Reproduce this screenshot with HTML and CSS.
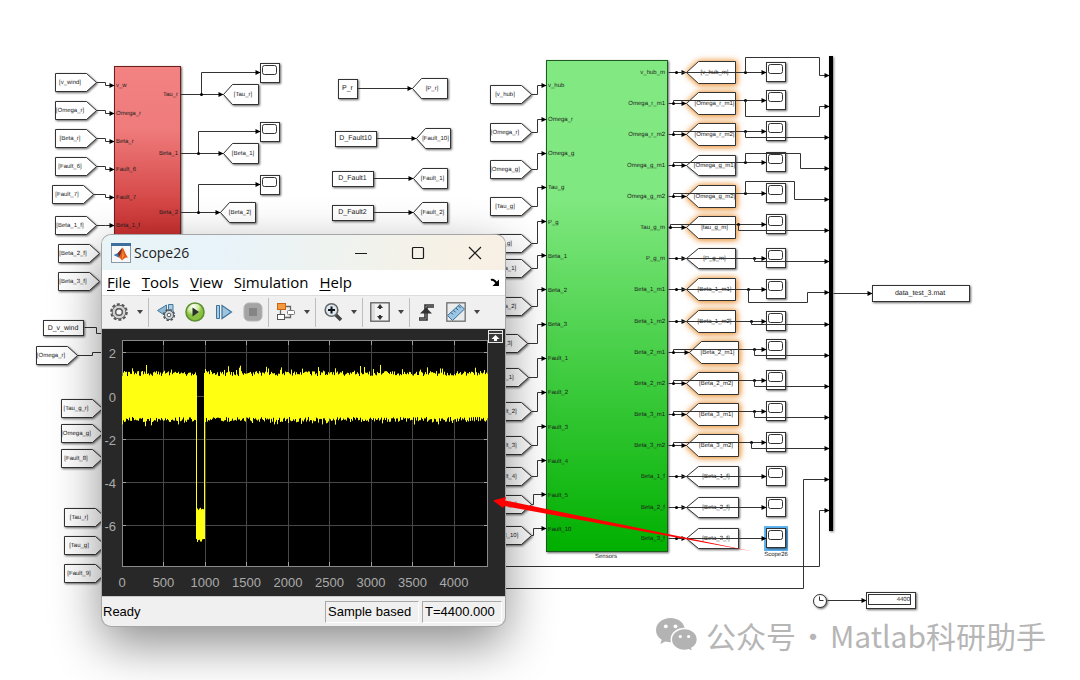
FILE: index.html
```html
<!DOCTYPE html>
<html lang="en">
<head>
<meta charset="utf-8">
<meta name="viewport" content="width=device-width, initial-scale=1">
<title>Scope26</title>
<link rel="stylesheet" href="styles.css">
</head>
<body>
<main class="desktop">
  <svg class="diagram" id="diagram" role="img" aria-label="Simulink block diagram">
    <defs>
      <linearGradient id="redFill" x1="0" y1="0" x2="0" y2="1">
        <stop offset="0" stop-color="#f38282"/><stop offset="0.33" stop-color="#ef7b7b"/><stop offset="0.88" stop-color="#c93030"/><stop offset="1" stop-color="#c22828"/>
      </linearGradient>
      <linearGradient id="greenFill" x1="0" y1="0" x2="0" y2="1">
        <stop offset="0" stop-color="#82e982"/><stop offset="0.28" stop-color="#80e880"/><stop offset="1" stop-color="#00b000"/>
      </linearGradient>
    </defs>
  </svg>

  <section class="window" aria-label="Scope26">
    <header class="titlebar">
      <svg class="app-icon" viewBox="0 0 20 20" width="20" height="20" aria-hidden="true">
        <rect x=".5" y=".5" width="19" height="19" fill="#f7f8fa" stroke="#8b98a5"/>
        <rect width="20" height="3" fill="#3e6f9e"/>
        <path d="M2.500 12 7 10l3 3-2.500 1.500z" fill="#3a78b5"/>
        <path d="M6.500 10.300 11.500 4.500 10.500 12.500 8.200 14z" fill="#7b2c1e"/>
        <path d="M11.500 4.500c2 2 3 7.500 6 10.500-2.500-1.200-4 .5-6.500 2.500-.8-1.500-1.800-2.500-3.300-3.300 2.300-2.200 3-6.200 3.800-9.700z" fill="#e4591b"/>
        <path d="M11.500 4.500c.6 3.500 0 8-.7 12.500l2-4z" fill="#f5a53a"/>
      </svg>
      <h1 class="title">Scope26</h1>
      <div class="window-buttons">
        <button type="button" aria-label="Minimize"><svg width="14" height="14"><path d="M1 7.500h12"/></svg></button>
        <button type="button" aria-label="Maximize"><svg width="14" height="14"><rect x="1.500" y="1.500" width="11" height="11" rx="1"/></svg></button>
        <button type="button" aria-label="Close"><svg width="14" height="14"><path d="M1 1l12 12M13 1 1 13"/></svg></button>
      </div>
    </header>

    <nav class="menubar">
      <button type="button"><u>F</u>ile</button>
      <button type="button"><u>T</u>ools</button>
      <button type="button"><u>V</u>iew</button>
      <button type="button">S<u>i</u>mulation</button>
      <button type="button"><u>H</u>elp</button>
      <button type="button" class="dock" aria-label="Dock"><svg width="10" height="9" viewBox="0 0 10 9"><path d="M1 2c2-1 3.500 0 5.500 3" fill="none" stroke="#000" stroke-width="2"/><path d="M9 1.500V8H2.500z"/></svg></button>
    </nav>

    <div class="toolbar">
      <div class="group">
        <button type="button" class="tool" aria-label="Configuration"><svg width="20" height="20" viewBox="0 0 20 20"><circle cx="10" cy="10" r="7.700" fill="none" stroke="#555" stroke-width="2.200" stroke-dasharray="3 1.840"/><circle cx="10" cy="10" r="6.800" fill="#d3d3d3" stroke="#666"/><circle cx="10" cy="10" r="3.300" fill="#f4f4f4" stroke="#555" stroke-width="1.400"/></svg></button>
        <button type="button" class="caret" aria-label="Configuration options"></button>
      </div>
      <div class="group">
        <button type="button" class="tool" aria-label="Step back"><svg width="20" height="20" viewBox="0 0 20 20"><path d="M10.500 3 1.500 8.500l9 6z" fill="#8fb9d6" stroke="#47779b"/><path d="M12.500 2.500h4.500v9h-4.500z" fill="#a9cce3" stroke="#47779b"/><circle cx="13" cy="13" r="5.200" fill="none" stroke="#4b545b" stroke-width="1.800" stroke-dasharray="2.400 1.650"/><circle cx="13" cy="13" r="4.500" fill="#d5d9dc" stroke="#545d64"/><circle cx="13" cy="13" r="1.800" fill="#fff" stroke="#545d64"/></svg></button>
        <button type="button" class="tool" aria-label="Run"><svg width="20" height="20" viewBox="0 0 20 20"><defs><radialGradient id="run" cx=".4" cy=".2"><stop offset="0" stop-color="#fff"/><stop offset=".6" stop-color="#d2eba2"/><stop offset="1" stop-color="#8cc043"/></radialGradient></defs><circle cx="10" cy="10" r="9" fill="url(#run)" stroke="#5c9130" stroke-width="1.600"/><path d="M7.500 5.500 14 10l-6.500 4.500z" fill="#26302c"/></svg></button>
        <button type="button" class="tool" aria-label="Step forward"><svg width="20" height="20" viewBox="0 0 20 20"><path d="M2.500 3.500h3v13h-3z" fill="#a8cbe4" stroke="#3f739b"/><path d="M8 3.500 17.500 10 8 16.500z" fill="#9dc5e1" stroke="#3f739b" stroke-width="1.200"/></svg></button>
        <button type="button" class="tool" aria-label="Stop"><svg width="20" height="20" viewBox="0 0 20 20"><rect x="1" y="1" width="18" height="18" rx="5" fill="#a4a4a4" stroke="#b4b4b4"/><rect x="6" y="6" width="8" height="8" fill="#858585"/></svg></button>
      </div>
      <div class="group">
        <button type="button" class="tool" aria-label="Highlight block"><svg width="20" height="20" viewBox="0 0 20 20"><path d="M9 4.500h5.500V9M9 15.500h5.500V12M4.500 7v5" fill="none" stroke="#666" stroke-width="1.300"/><rect x="1.500" y="1.500" width="8" height="6" fill="#f59a3c" stroke="#c7651a"/><rect x="1.500" y="12.500" width="7" height="5" fill="#fff" stroke="#555"/><rect x="11.500" y="8.500" width="7" height="4" rx="1" fill="#fff" stroke="#777"/></svg></button>
        <button type="button" class="caret" aria-label="Highlight options"></button>
      </div>
      <div class="group">
        <button type="button" class="tool" aria-label="Zoom in"><svg width="20" height="20" viewBox="0 0 20 20"><path d="m12.500 12.500 5.500 5.500" stroke="#444" stroke-width="3.500"/><circle cx="8.500" cy="8" r="6.300" fill="#dce9f3" stroke="#666" stroke-width="1.600"/><path d="M8.500 4.500v7M5 8h7" stroke="#111" stroke-width="2"/></svg></button>
        <button type="button" class="caret" aria-label="Zoom options"></button>
      </div>
      <div class="group">
        <button type="button" class="tool" aria-label="Scale axes"><svg width="20" height="20" viewBox="0 0 20 20"><rect x=".8" y=".8" width="18.400" height="18.400" fill="#f2f2f2" stroke="#666" stroke-width="1.400"/><path d="M2 2h3v16H2z" fill="#dcdedf"/><path d="M10 2 13 6H7zM10 18l3-4H7z" fill="#333"/><path d="M10 4v3M10 13v3" stroke="#333" stroke-width="2"/></svg></button>
        <button type="button" class="caret" aria-label="Scale options"></button>
      </div>
      <div class="group">
        <button type="button" class="tool" aria-label="Triggers"><svg width="20" height="20" viewBox="0 0 20 20"><path d="M2 17h7V4h8" fill="none" stroke="#333" stroke-width="3.600"/><path d="M2.500 17H9V4h8" fill="none" stroke="#888"/><path d="M3 11.500h12L9 5.500z" fill="#333"/></svg></button>
        <button type="button" class="tool" aria-label="Measurements"><svg width="20" height="20" viewBox="0 0 20 20"><rect x=".8" y=".8" width="18.400" height="18.400" fill="#e9ebec" stroke="#777" stroke-width="1.400"/><path d="M1.500 13.500 13.500 2.500l5 4.500L6.500 18.500z" fill="#9bc7e6" stroke="#466f92"/><path d="m5 10.500 2 2m.5-4.200 2 2m.5-4.200 2 2m.5-4.200 2 2" stroke="#294f70"/></svg></button>
        <button type="button" class="caret" aria-label="Measurement options"></button>
      </div>
    </div>

    <svg class="plot" id="plot" viewBox="0 0 403 267" role="img" aria-label="Scope signal, 0 to 4400"></svg>

    <footer class="statusbar">
      <span class="ready">Ready</span>
      <span class="panel panel-mode">Sample based</span>
      <span class="panel panel-time">T=4400.000</span>
    </footer>
  </section>

  <svg class="pointer" aria-hidden="true"><path d="M493 500.500 506 497l-1 3.500L753 551.500 504 506l-1 2z" fill="#ff0000"/></svg>

  <div class="watermark">
    <svg width="42" height="34" viewBox="0 0 42 34" aria-hidden="true">
      <path d="M14.500 0C6.500 0 0 5.200 0 12.200c0 4 2.200 7.400 5.700 9.600L4.300 26l5-2.600c1.700.5 3.400.8 5.200.8C22.500 24.200 29 19 29 12.200S22.500 0 14.500 0z"/>
      <path class="cut" d="M28.500 10.500c-7.200 0-13.200 4.700-13.200 11s6 11 13.200 11c1.600 0 3-.2 4.400-.7l4 2.200-1-3.800c3.300-2 5.500-5.100 5.500-8.700 0-6.300-5.700-11-12.900-11z"/>
      <circle class="eye" cx="9.800" cy="8.300" r="1.900"/><circle class="eye" cx="19.500" cy="8.300" r="1.900"/>
      <circle class="eye" cx="24.300" cy="18.500" r="1.600"/><circle class="eye" cx="32.600" cy="18.500" r="1.600"/>
    </svg>
    <span>公众号</span><span>·</span><span>Matlab科研助手</span>
  </div>
</main>
<script src="diagram.js"></script>
</body>
</html>
```
FILE: styles.css
```css
* { box-sizing: border-box; }

body {
  margin: 0;
  background: #fff;
  font-family: "Liberation Sans", Arial, sans-serif;
}

.desktop {
  position: relative;
  min-height: 100vh;
  overflow: hidden;
}

/* Block diagram */
.diagram,
.pointer {
  position: absolute;
  inset: 0;
  width: 100%;
  height: 100%;
}
.pointer { pointer-events: none; }

.diagram text {
  font-size: 6px;
  fill: #222;
  text-rendering: geometricPrecision;
}
.diagram .big { font-size: 7px; }
.diagram .port { fill: #1d1d1d; }
.wire { fill: none; stroke: #333; stroke-width: 1; }
.tip, .dot { fill: #000; }
.block {
  fill: #fff;
  stroke: #333;
  stroke-width: 1;
  filter: drop-shadow(1px 1px 1px rgba(0, 0, 0, 0.6));
}
.block-red { fill: url(#redFill); stroke: #6b2020; }
.block-green { fill: url(#greenFill); stroke: #1f5a1f; }
.screen { fill: #fff; stroke: #333; }
.hilite {
  filter: drop-shadow(0 0 3px rgba(240, 150, 50, 0.8)) drop-shadow(1px 1px 2px rgba(230, 140, 50, 0.7));
}
.selected { fill: #5eb6f5; }
.mux { fill: #000; filter: drop-shadow(1px 1px 1px rgba(0, 0, 0, 0.5)); }

/* Scope window */
.window {
  position: absolute;
  left: 102px;
  top: 235px;
  width: 403px;
  display: flex;
  flex-direction: column;
  overflow: hidden;
  border-radius: 9px;
  background: #f0f0f0;
  box-shadow: 0 0 0 1px #a6a6a6, 0 18px 50px rgba(0, 0, 0, 0.46);
}

button {
  margin: 0;
  padding: 0;
  border: 0;
  background: none;
  color: inherit;
  font: inherit;
}

.titlebar {
  display: flex;
  align-items: center;
  height: 35px;
  padding: 0 2px 0 9px;
  background: linear-gradient(100deg, #e8f4f5 0%, #e8f3fa 28%, #eef3f0 55%, #f6f1e6 85%, #f8efe4 100%);
  font-family: "Open Sans", "Noto Sans", sans-serif;
}
.title {
  margin: 0 0 0 3px;
  font-size: 14px;
  font-weight: 400;
  color: #222;
}
.window-buttons {
  display: flex;
  margin-left: auto;
}
.window-buttons button {
  display: grid;
  place-items: center;
  width: 57px;
  height: 35px;
}
.window-buttons svg { fill: none; stroke: #1a1a1a; stroke-width: 1.2; }

.menubar {
  display: flex;
  align-items: center;
  gap: 11px;
  height: 25px;
  padding: 0 5px;
  background: #fff;
  font: 15px/25px "Open Sans", "Noto Sans", sans-serif;
  color: #000;
}
.menubar u { text-underline-offset: 2px; text-decoration-thickness: 1px; }
.menubar .dock { display: grid; margin-left: auto; }

.toolbar {
  display: flex;
  align-items: center;
  height: 34px;
  background: #f0f0f0;
  border-top: 1px solid #dcdcdc;
  border-bottom: 1px solid #cfcfcf;
}
.group {
  display: flex;
  align-items: center;
  height: 29px;
  padding: 0 1px 0 2px;
  border-right: 1px solid #bdbdbd;
}
.group:last-child { border-right: 0; }
.tool {
  display: grid;
  place-items: center;
  width: 29px;
  height: 28px;
}
.caret {
  display: grid;
  place-items: center;
  width: 14px;
  height: 28px;
}
.caret::before {
  content: "";
  border: 3px solid transparent;
  border-top: 4px solid #444;
  border-bottom: 0;
}

.plot {
  display: block;
  width: 100%;
  background: #282828;
}
.plot text { font-size: 13px; fill: #ababab; }
.plot .area { fill: #000; stroke: #8a8a8a; }
.plot .grid { stroke: #484848; fill: none; }
.plot .tick { stroke: #a0a0a0; fill: none; }
.plot .trace { stroke: #ffff12; stroke-width: 1; fill: none; }

.statusbar {
  display: flex;
  align-items: center;
  gap: 3px;
  height: 30px;
  padding: 1px 3px 0 1px;
  border-top: 1px solid #c8c8c8;
  font-size: 13px;
  line-height: 20px;
  color: #000;
}
.ready { margin-right: auto; }
.panel {
  height: 22px;
  padding-left: 2px;
  border: 1px solid;
  border-color: #a8a8a8 #fff #fff #a8a8a8;
  white-space: nowrap;
}
.panel-mode { width: 94px; }
.panel-time { width: 80px; }

/* Watermark */
.watermark {
  position: absolute;
  right: 34px;
  bottom: 23px;
  display: flex;
  align-items: center;
  gap: 2px;
  font: 400 30px/44px "Noto Sans CJK SC", sans-serif;
  color: #b6b6b6;
}
.watermark svg { margin-right: 6px; fill: #b3b3b3; }
.watermark .cut { stroke: #fff; stroke-width: 1.5; }
.watermark .eye { fill: #fff; }
```
FILE: diagram.js
```js
const NS = "http://www.w3.org/2000/svg";
const diagram = document.getElementById("diagram");
const plot = document.getElementById("plot");

// Centre one-pixel strokes on the pixel grid.
const px = v => Math.floor(v) + 0.5;

function add(parent, name, attrs, text) {
  const el = document.createElementNS(NS, name);
  for (const key in attrs) el.setAttribute(key, attrs[key]);
  if (text !== undefined) el.textContent = text;
  parent.appendChild(el);
  return el;
}
function label(x, y, text, anchor = "middle", cls = "") {
  add(diagram, "text", { x, y: y + 2, "text-anchor": anchor, class: cls }, text);
}
function poly(points, cls, close) {
  const d = points.map((p, i) => (i ? "L" : "M") + px(p[0]) + " " + px(p[1])).join("");
  add(diagram, "path", { d: d + (close ? "Z" : ""), class: cls });
}
function wire(points, arrow = true) {
  poly(points, "wire");
  if (!arrow) return;
  const [x, y] = points[points.length - 1];
  add(diagram, "path", { d: `M${px(x)} ${px(y)}l-5 -2.500v5z`, class: "tip" });
}
const dot = (x, y) => add(diagram, "circle", { cx: px(x), cy: px(y), r: 1.5, class: "dot" });

function fromTag(x, y, text, tip = x + 41, textX = x + 15) {
  poly([[x, y - 9], [tip - 10, y - 9], [tip, y], [tip - 10, y + 9], [x, y + 9]], "block", true);
  label(textX, y, text);
}
function gotoTag(x, right, y, half, notch, text, cls = "") {
  poly([[x, y], [x + notch, y - half], [right, y - half], [right, y + half], [x + notch, y + half]], "block " + cls, true);
  label((x + notch + right) / 2 - 2, y, text);
}
function box(x, y, w, h, cls = "block") {
  add(diagram, "rect", { x: px(x), y: px(y), width: w, height: h, class: cls });
}
function scope(x, y) {
  box(x, y, 19, 19);
  add(diagram, "rect", { x: px(x + 2), y: px(y + 2), width: 14, height: 9, rx: 2, class: "screen" });
}

// Red subsystem
box(114, 66, 66, 190, "block block-red");
[["[v_wind]", "v_w", 55, 82, 85], ["[Omega_r]", "Omega_r", 55, 110, 113], ["[Beta_r]", "Beta_r", 55, 138, 141],
 ["[Fault_6]", "Fault_6", 55, 166, 169], ["[Fault_7]", "Fault_7", 52, 194, 197], ["[Beta_1_f]", "Beta_1_f", 55, 225, 225]
].forEach(([tag, port, x, y, portY]) => {
  fromTag(x, y, tag);
  wire([[x + 41, y], [105, y], [105, portY], [114, portY]]);
  label(116, portY, port, "start", "port");
});
[["Tau_r", 94, 223, 258, 201, 72], ["Beta_1", 153, 223, 258, 198, 131], ["Beta_2", 212, 220, 255, 198, 184]
].forEach(([name, y, x, right, branch, scopeY]) => {
  label(178, y, name, "end", "port");
  gotoTag(x, right, y, 10, 9, `[${name}]`);
  scope(260, scopeY - 9);
  wire([[180, y], [x, y]]);
  wire([[branch, y], [branch, scopeY], [260, scopeY]]);
  dot(branch, y);
});

// Inputs left of the scope window
[["[Beta_2_f]", 58, 253], ["[Beta_3_f]", 58, 281], ["[Omega_r]", 36, 355], ["[Tau_g_r]", 61, 408], ["[Omega_g]", 61, 433],
 ["[Fault_8]", 61, 458], ["[Tau_r]", 64, 517], ["[Tau_g]", 64, 545], ["[Fault_9]", 64, 573]
].forEach(([tag, x, y]) => fromTag(x, y, tag));
box(43, 320, 40, 15);
label(63, 328, "D_v_wind", "middle", "big");
wire([[84, 327], [96, 327], [96, 333], [104, 333]], false);
wire([[77, 355], [92, 355], [92, 352], [104, 352]], false);

// Constants and their Goto tags
[["P_r", 338, 19, 88, 19, 412, 447, "[P_r]"], ["D_Fault10", 335, 41, 138, 15, 416, 450, "[Fault_10]"],
 ["D_Fault1", 332, 41, 178, 15, 413, 447, "[Fault_1]"], ["D_Fault2", 332, 41, 212, 15, 413, 447, "[Fault_2]"]
].forEach(([name, x, w, y, h, gx, right, tag]) => {
  box(x, y - Math.floor(h / 2), w, h);
  label(x + w / 2, y, name, "middle", "big");
  gotoTag(gx, right, y, 10, 9, tag);
  wire([[x + w, y], [gx, y]]);
});

// Sensors subsystem
box(546, 60, 121, 491, "block block-green");
label(606, 556, "Sensors");
[["v_hub", 94], ["Omega_r", 132], ["Omega_g", 169], ["Tau_g", 206], ["P_g", 243], ["Beta_1", 268], ["Beta_2", 306],
 ["Beta_3", 343, 527], ["Fault_1", 377, 528], ["Fault_2", 411], ["Fault_3", 445], ["Fault_4", 476], ["Fault_5", 504], ["Fault_10", 535]
].forEach(([name, y, tip = 531], i) => {
  const portY = 85 + i * 34.15;
  const elbow = i > 11 ? 533 : 537;
  fromTag(490, y, `[${name}]`, tip, tip - 26);
  wire([[tip, y], [elbow, y], [elbow, portY], [546, portY]]);
  label(548, portY, name, "start", "port");
});

// Sensor outputs: port, tag, tag x, tag right, highlighted, wire offset, branch x, detour to the mux
[["v_hub_m", "v_hub_m", 686, 735, 1, 0, 745, [57, 819]],
 ["Omega_r_m1", "Omega_r_m1", 686, 735, 1, 3, 745, [116, 819]],
 ["Omega_r_m2", "Omega_r_m2", 686, 735, 1, 3, 745],
 ["Omega_g_m1", "Omega_g_m1", 686, 735, 0, 3, 745, [153, 800]],
 ["Omega_g_m2", "Omega_g_m2", 686, 735, 1, 3, 745, [181, 794]],
 ["Tau_g_m", "tau_g_m", 686, 735, 1, 3, 738],
 ["P_g_m", "P_g_m", 686, 735, 0, 0, 754],
 ["Beta_1_m1", "Beta_1_m1", 686, 735, 1, 0, 748, [302, 807]],
 ["Beta_1_m2", "Beta_1_m2", 686, 735, 1, 0, 751],
 ["Beta_2_m1", "Beta_2_m1", 689, 738, 1, 3, 754],
 ["Beta_2_m2", "Beta_2_m2", 686, 738, 1, 3, 754],
 ["Beta_3_m1", "Beta_3_m1", 686, 738, 1, 3, 754],
 ["Beta_3_m2", "Beta_3_m2", 686, 738, 1, 3, 751],
 ["Beta_1_f", "Beta_1_f", 686, 738, 0, 0],
 ["Beta_2_f", "Beta_2_f", 686, 738, 0, 0],
 ["Beta_3_f", "Beta_3_f", 686, 738, 0, 0]
].forEach(([port, tag, x, right, lit, offset, branch, detour], i) => {
  const y = Math.floor(72.7 + i * 31.04);
  const lineY = y - offset;
  const muxY = Math.floor(75.7 + i * 31.04);
  const start = offset ? (i === 5 ? 670 : 673) : 676;
  label(665, y, port, "end", "port");
  if (lit) gotoTag(x, right, y, 11, 12, `[${tag}]`, "hilite");
  else gotoTag(x, right, y, 10, 12, `[${tag}]`);
  if (i === 15) add(diagram, "rect", { x: 764, y: 526, width: 24, height: 25, class: "selected" });
  scope(766, lineY - 10);
  wire([[668, y], [x, y]]);
  wire([[start, y], [start, lineY], [766, lineY]]);
  dot(start, y);
  if (!branch) return;
  dot(branch, lineY);
  wire(detour
    ? [[branch, lineY], [branch, detour[0]], [detour[1], detour[0]], [detour[1], muxY], [829, muxY]]
    : [[branch, lineY], [branch, muxY], [829, muxY]]);
});
label(776, 554, "Scope26");

// Mux and outputs
wire([[480, 588], [803, 588], [803, 479], [829, 479]]);
wire([[480, 566], [819, 566], [819, 510], [829, 510]]);
add(diagram, "rect", { x: 829, y: 56, width: 4, height: 475, class: "mux" });
wire([[833, 293], [872, 293]]);
box(872, 285, 97, 16);
label(920, 293, "data_test_3.mat", "middle", "big");

add(diagram, "circle", { cx: 820, cy: 601, r: 6.5, class: "block" });
poly([[819, 596], [819, 600], [823, 600]], "wire");
wire([[827, 600], [866, 600]]);
box(866, 592, 49, 16);
box(868, 594, 42, 10, "screen");
label(910, 599, "4400", "end");

// Scope plot
add(plot, "rect", { x: 20.5, y: 11.5, width: 365, height: 226, class: "area" });
for (let i = 0; i <= 8; i++) {
  const x = px(20 + i * 41.5);
  if (i) {
    add(plot, "path", { d: `M${x} 12V237`, class: "grid" });
    add(plot, "path", { d: `M${x} 12v4M${x} 237v-4`, class: "tick" });
  }
  add(plot, "text", { x: 20 + i * 41.5, y: 258, "text-anchor": "middle" }, String(i * 500));
}
[2, 0, -2, -4, -6].forEach(v => {
  const y = px(67 - v * 21.6);
  add(plot, "path", { d: `M21 ${y}H385`, class: "grid" });
  add(plot, "path", { d: `M21 ${y}h3M385 ${y}h-3`, class: "tick" });
  add(plot, "text", { x: 14, y: y + 5, "text-anchor": "end" }, String(v));
});

let seed = 26;
const rand = () => (seed = (seed * 16807) % 2147483647) / 2147483647;
let trace = "";
for (let x = 20; x < 386; x++) {
  const spike = () => (rand() > 0.86 ? rand() * 7 : 0);
  if (x >= 95 && x < 102) {
    trace += `M${x + 0.5} ${181 - rand() * 3}V${210 + rand() * 4}`;
  } else {
    const top = 47 - rand() * 5 - spike();
    const bottom = 88 + rand() * 5 + spike() * 0.7;
    trace += `M${x + 0.5} ${top.toFixed(1)}V${bottom.toFixed(1)}`;
  }
}
trace += "M94.500 60V210M102.500 60V210";
add(plot, "path", { d: trace, class: "trace" });

// Button that restores the axes
add(plot, "rect", { x: 386.5, y: 1.5, width: 14, height: 12, fill: "#3a3a3a", stroke: "#e6e6e6" });
add(plot, "path", { d: "M387 4.500h13", stroke: "#e6e6e6" });
add(plot, "path", { d: "M393.500 6l4 4h-2.500v2h-3v-2h-2.500z", fill: "#fff" });
```
